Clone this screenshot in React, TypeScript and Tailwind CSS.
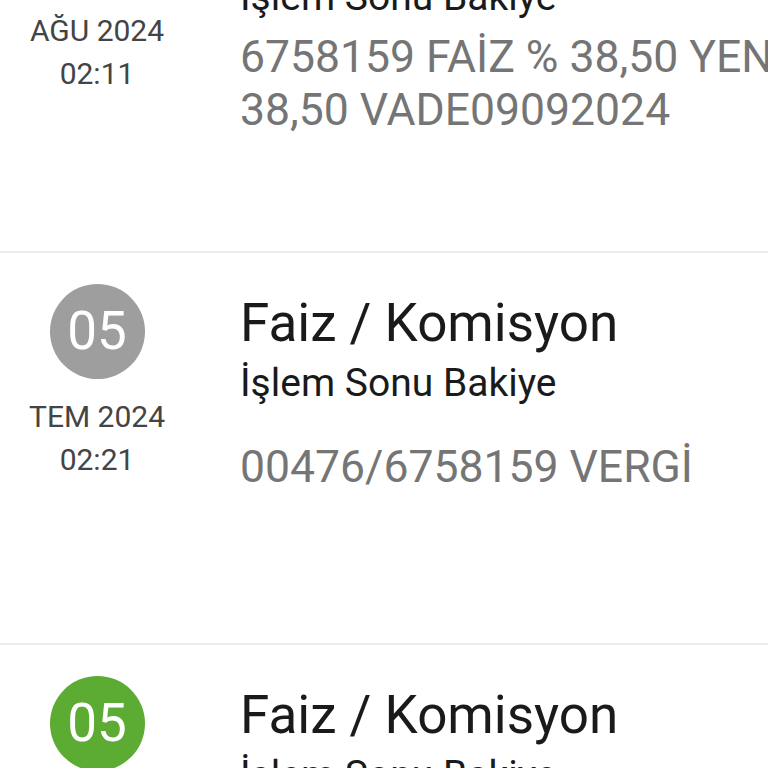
import React from "react";

type Item = {
  day: string;
  month: string;
  time: string;
  color: string;
  title: string;
  subtitle: string;
  detail: string[];
};

const items: Item[] = [
  {
    day: "05",
    month: "AĞU 2024",
    time: "02:11",
    color: "bg-[#9e9e9e]",
    title: "Faiz / Komisyon",
    subtitle: "İşlem Sonu Bakiye",
    detail: ["6758159 FAİZ % 38,50 YENİ", "38,50 VADE09092024"],
  },
  {
    day: "05",
    month: "TEM 2024",
    time: "02:21",
    color: "bg-[#9e9e9e]",
    title: "Faiz / Komisyon",
    subtitle: "İşlem Sonu Bakiye",
    detail: ["00476/6758159 VERGİ"],
  },
  {
    day: "05",
    month: "TEM 2024",
    time: "02:21",
    color: "bg-[#5cab33]",
    title: "Faiz / Komisyon",
    subtitle: "İşlem Sonu Bakiye",
    detail: ["00476/6758159 FAİZ"],
  },
];

function Row({ item, first }: { item: Item; first: boolean }) {
  return (
    <div
      className={`flex shrink-0 border-b-2 border-[#ececec] ${
        first ? "h-[386px]" : "h-[392px]"
      }`}
    >
      <div className="flex w-[194px] shrink-0 flex-col items-center pt-[31px]">
        <div
          className={`flex h-[95px] w-[95px] items-center justify-center rounded-full ${item.color} text-[53px] leading-none text-white`}
        >
          {item.day}
        </div>
        <div className="mt-[16px] text-[30px] leading-[43px] text-[#444444]">
          {item.month}
        </div>
        <div className="text-[30px] leading-[43px] text-[#444444]">{item.time}</div>
      </div>
      <div className="flex min-w-0 flex-1 flex-col pl-[46px] pt-[40px]">
        <div className="whitespace-nowrap text-[53px] leading-[60px] text-[#1a1a1a]">
          {item.title}
        </div>
        <div className="mt-[8px] whitespace-nowrap text-[39px] leading-[44px] text-[#1a1a1a]">
          {item.subtitle}
        </div>
        <div
          className={`flex h-[120px] flex-col justify-center ${
            first ? "mt-[5px]" : "mt-[2px]"
          }`}
        >
          {item.detail.map((d, i) => (
            <div
              key={i}
              className="whitespace-nowrap text-[44.5px] leading-[53px] text-[#757575]"
            >
              {d}
            </div>
          ))}
        </div>
      </div>
    </div>
  );
}

export default function App() {
  return (
    <div
      className="h-[768px] w-[768px] overflow-hidden bg-white"
      style={{ fontFamily: "Roboto, 'Noto Sans', sans-serif" }}
    >
      <div className="-mt-[133px] flex flex-col">
        {items.map((it, i) => (
          <Row key={i} item={it} first={i === 0} />
        ))}
      </div>
    </div>
  );
}
